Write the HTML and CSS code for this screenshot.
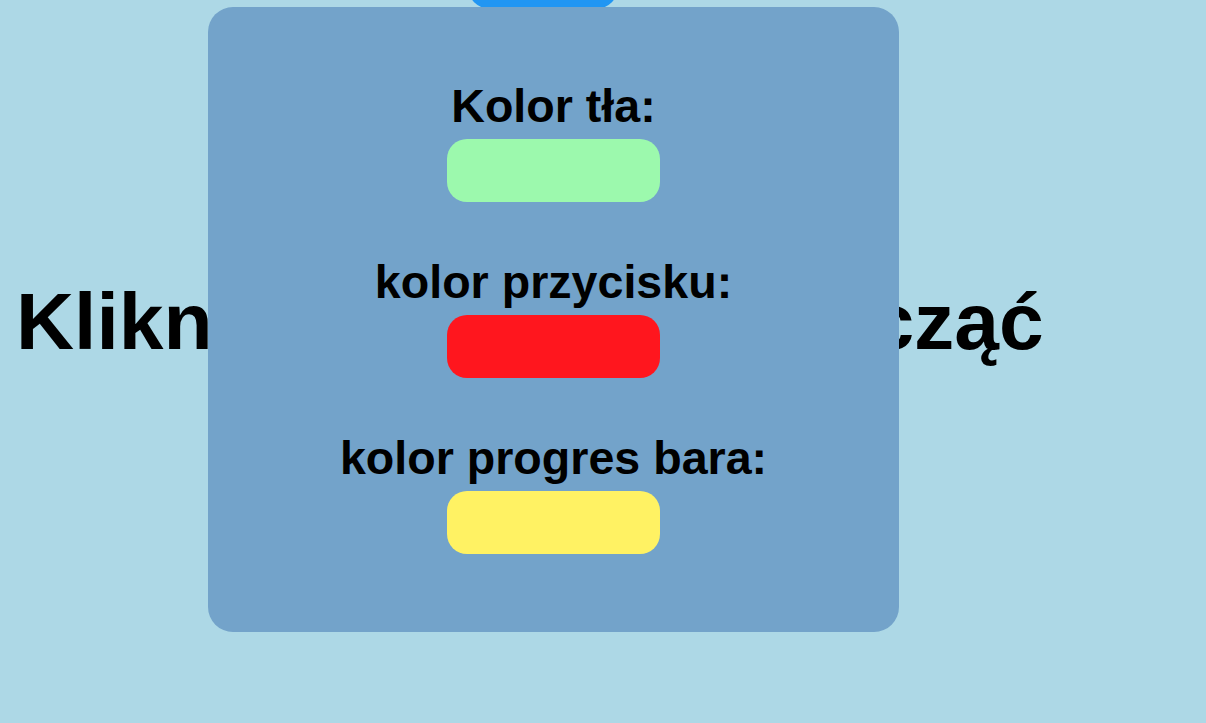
FILE: index.html
```html
<!DOCTYPE html>
<html lang="pl">
<head>
    <meta charset="UTF-8">
    <meta name="viewport" content="width=device-width, initial-scale=1.0">
    <title>Ustawienia</title>
    <link rel="stylesheet" href="styles.css">
</head>
<body>
    <button class="menu-button" aria-label="Ustawienia"></button>

    <h1 class="start-text">Kliknij przycisk aby zacząć</h1>

    <!-- Okno ustawień kolorów -->
    <div class="settings">
        <div class="setting">
            <label class="setting-label">Kolor tła:</label>
            <div class="swatch swatch-bg"></div>
        </div>
        <div class="setting">
            <label class="setting-label">kolor przycisku:</label>
            <div class="swatch swatch-button"></div>
        </div>
        <div class="setting">
            <label class="setting-label">kolor progres bara:</label>
            <div class="swatch swatch-bar"></div>
        </div>
    </div>
</body>
</html>
```

FILE: styles.css
```css
body {
    margin: 0;
    height: 723px;
    overflow: hidden;
    background-color: #add8e6;
    font-family: "Liberation Sans", Arial, sans-serif;
    position: relative;
}
.start-text {
    margin: 0;
    padding: 275px 0 0 16px;
    font-size: 80.4px;
    font-weight: bold;
    color: #000;
    white-space: nowrap;
}
.menu-button {
    position: absolute;
    top: -40px;
    left: 468px;
    width: 150px;
    height: 49px;
    border: none;
    border-radius: 22px;
    background-color: #2196f3;
}
.settings {
    position: absolute;
    top: 7px;
    left: 208px;
    width: 691px;
    height: 625px;
    box-sizing: border-box;
    padding-top: 73px;
    border-radius: 25px;
    background-color: #73a3ca;
    display: flex;
    flex-direction: column;
    align-items: center;
    gap: 54px;
}
.setting {
    display: flex;
    flex-direction: column;
    align-items: center;
    gap: 6px;
}
.setting-label {
    font-size: 46.6px;
    line-height: 53px;
    font-weight: bold;
    color: #000;
}
.swatch {
    width: 213px;
    height: 63px;
    border-radius: 20px;
}
.swatch-bg {
    background-color: #9cf9ad;
}
.swatch-button {
    background-color: #ff161e;
}
.swatch-bar {
    background-color: #fff263;
}
```
